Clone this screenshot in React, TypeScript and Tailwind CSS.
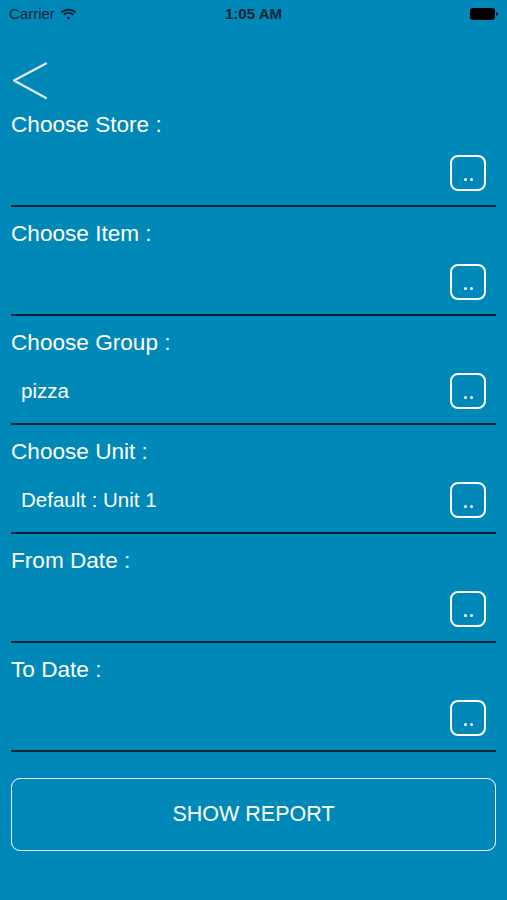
import React from 'react';

const sections = [
  { label: 'Choose Store :', value: '' },
  { label: 'Choose Item :', value: '' },
  { label: 'Choose Group :', value: 'pizza' },
  { label: 'Choose Unit :', value: 'Default : Unit 1' },
  { label: 'From Date :', value: '' },
  { label: 'To Date :', value: '' },
];

const StatusBar: React.FC = () => (
  <div className="flex items-center justify-between h-[28px] px-[9px] text-[#0b2533] text-[15px]">
    <div className="flex items-center gap-[5px] w-[120px]">
      <span>Carrier</span>
      <svg width="17" height="13" viewBox="0 0 17 12" fill="#0b2533">
        <path d="M8.5 2.2c2.5 0 4.8 1 6.5 2.6l1.3-1.4C14.3 1.5 11.5.3 8.5.3S2.7 1.5.7 3.4L2 4.8c1.7-1.6 4-2.6 6.5-2.6z" />
        <path d="M8.5 5.3c1.6 0 3 .6 4.1 1.6l1.3-1.4C12.5 4.2 10.6 3.4 8.5 3.4S4.5 4.2 3.1 5.5l1.3 1.4c1.1-1 2.5-1.6 4.1-1.6z" />
        <path d="M8.5 8.3c.8 0 1.4.3 1.9.7L8.5 11.2 6.6 9c.5-.4 1.1-.7 1.9-.7z" />
      </svg>
    </div>
    <span className="font-bold">1:05 AM</span>
    <div className="flex items-center justify-end w-[120px]">
      <div className="w-[25px] h-[12px] rounded-[3px] bg-black" />
      <div className="w-[2px] h-[4px] rounded-r-sm bg-[#0b2533] ml-[1px]" />
    </div>
  </div>
);

const DotsButton: React.FC = () => (
  <button className="w-[36px] h-[36px] rounded-[8px] border-2 border-white flex items-end justify-center pb-[8px]">
    <span className="flex gap-[3px]">
      <span className="w-[3px] h-[3px] rounded-full bg-white" />
      <span className="w-[3px] h-[3px] rounded-full bg-white" />
    </span>
  </button>
);

export default function App() {
  return (
    <div
      className="w-[507px] h-[900px] bg-[#0088b8] text-white overflow-hidden"
      style={{ fontFamily: '"Liberation Sans", Arial, sans-serif' }}
    >
      <StatusBar />
      <div className="h-[70px] pl-[12px] pt-[34px]">
        <svg width="36" height="38" viewBox="0 0 36 38" fill="none">
          <path d="M34 1.5 L2 18.5 L34 36" stroke="#e4ecef" strokeWidth="2.2" strokeLinecap="round" strokeLinejoin="round" />
        </svg>
      </div>
      <div className="px-[11px]">
        {sections.map((s) => (
          <div key={s.label}>
            <div className="mt-[15px] h-[24px] leading-[24px] text-[22.6px]">{s.label}</div>
            <div className="mt-[18px] h-[36px] flex items-center justify-between pr-[10px]">
              <span className="pl-[10px] text-[20.5px]">{s.value}</span>
              <DotsButton />
            </div>
            <div className="mt-[14px] h-[2px] bg-[#0d2532]" />
          </div>
        ))}
        <button className="mt-[26px] w-full h-[73px] rounded-[9px] border border-white text-[21.5px] text-white flex items-center justify-center">
          SHOW REPORT
        </button>
      </div>
    </div>
  );
}
